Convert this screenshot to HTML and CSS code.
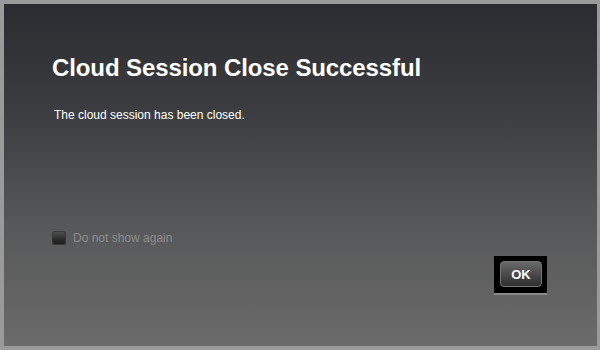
FILE: index.html
```html
<!DOCTYPE html>
<html>
<head>
<meta charset="utf-8">
<link rel="stylesheet" href="styles.css">
</head>
<body>
<div class="frame">
  <div class="dialog">
    <h1 class="title">Cloud Session Close Successful</h1>
    <p class="message">The cloud session has been closed.</p>
    <label class="check"><span class="box"></span><span class="label">Do not show again</span></label>
    <div class="actions">
      <div class="btn-wrap"><button class="btn">OK</button></div>
    </div>
  </div>
</div>
</body>
</html>
```
FILE: styles.css
```css
html, body {
  margin: 0;
  padding: 0;
  width: 600px;
  height: 350px;
  overflow: hidden;
}
.frame {
  box-sizing: border-box;
  width: 600px;
  height: 350px;
  background: #9a9a9a;
  padding: 4px 3px 4px 4px;
  display: flex;
}
.dialog {
  flex: 1;
  background: linear-gradient(to bottom, #2a2c31 0%, #3a3c3f 30%, #575859 65%, #6b6b6b 100%);
  font-family: "Liberation Sans", Arial, sans-serif;
  display: flex;
  flex-direction: column;
  padding: 0 48px 0 48px;
}
.title {
  margin: 48px 0 0 0;
  color: #fff;
  font-size: 24px;
  font-weight: bold;
  letter-spacing: -0.1px;
  line-height: 32px;
}
.message {
  margin: 24px 0 0 2px;
  color: #fff;
  font-size: 12px;
  line-height: 14px;
}
.check {
  margin-top: 109px;
  display: flex;
  align-items: center;
  gap: 7px;
}
.box {
  width: 14px;
  height: 14px;
  border-radius: 3px;
  background: linear-gradient(to bottom, #555 0%, #2a2a2a 60%, #1e1e1e 100%);
  box-shadow: inset 0 0 0 1px #3a3a3a;
}
.label {
  color: #8d8d8d;
  font-size: 12px;
}
.actions {
  display: flex;
  justify-content: flex-end;
  margin-top: 11px;
  margin-right: 2px;
}
.btn-wrap {
  background: #000;
  padding: 5px 5px 6px 6px;
  box-shadow: 0 2px 0 #8a8a8a;
}
.btn {
  display: block;
  width: 42px;
  height: 26px;
  border: 1px solid #777;
  border-radius: 4px;
  background: linear-gradient(to bottom, #6a6a6a 0%, #4a4a4a 50%, #2e2e2e 100%);
  color: #fff;
  font-family: "Liberation Sans", Arial, sans-serif;
  font-size: 13px;
  font-weight: bold;
  padding: 0;
}
```
